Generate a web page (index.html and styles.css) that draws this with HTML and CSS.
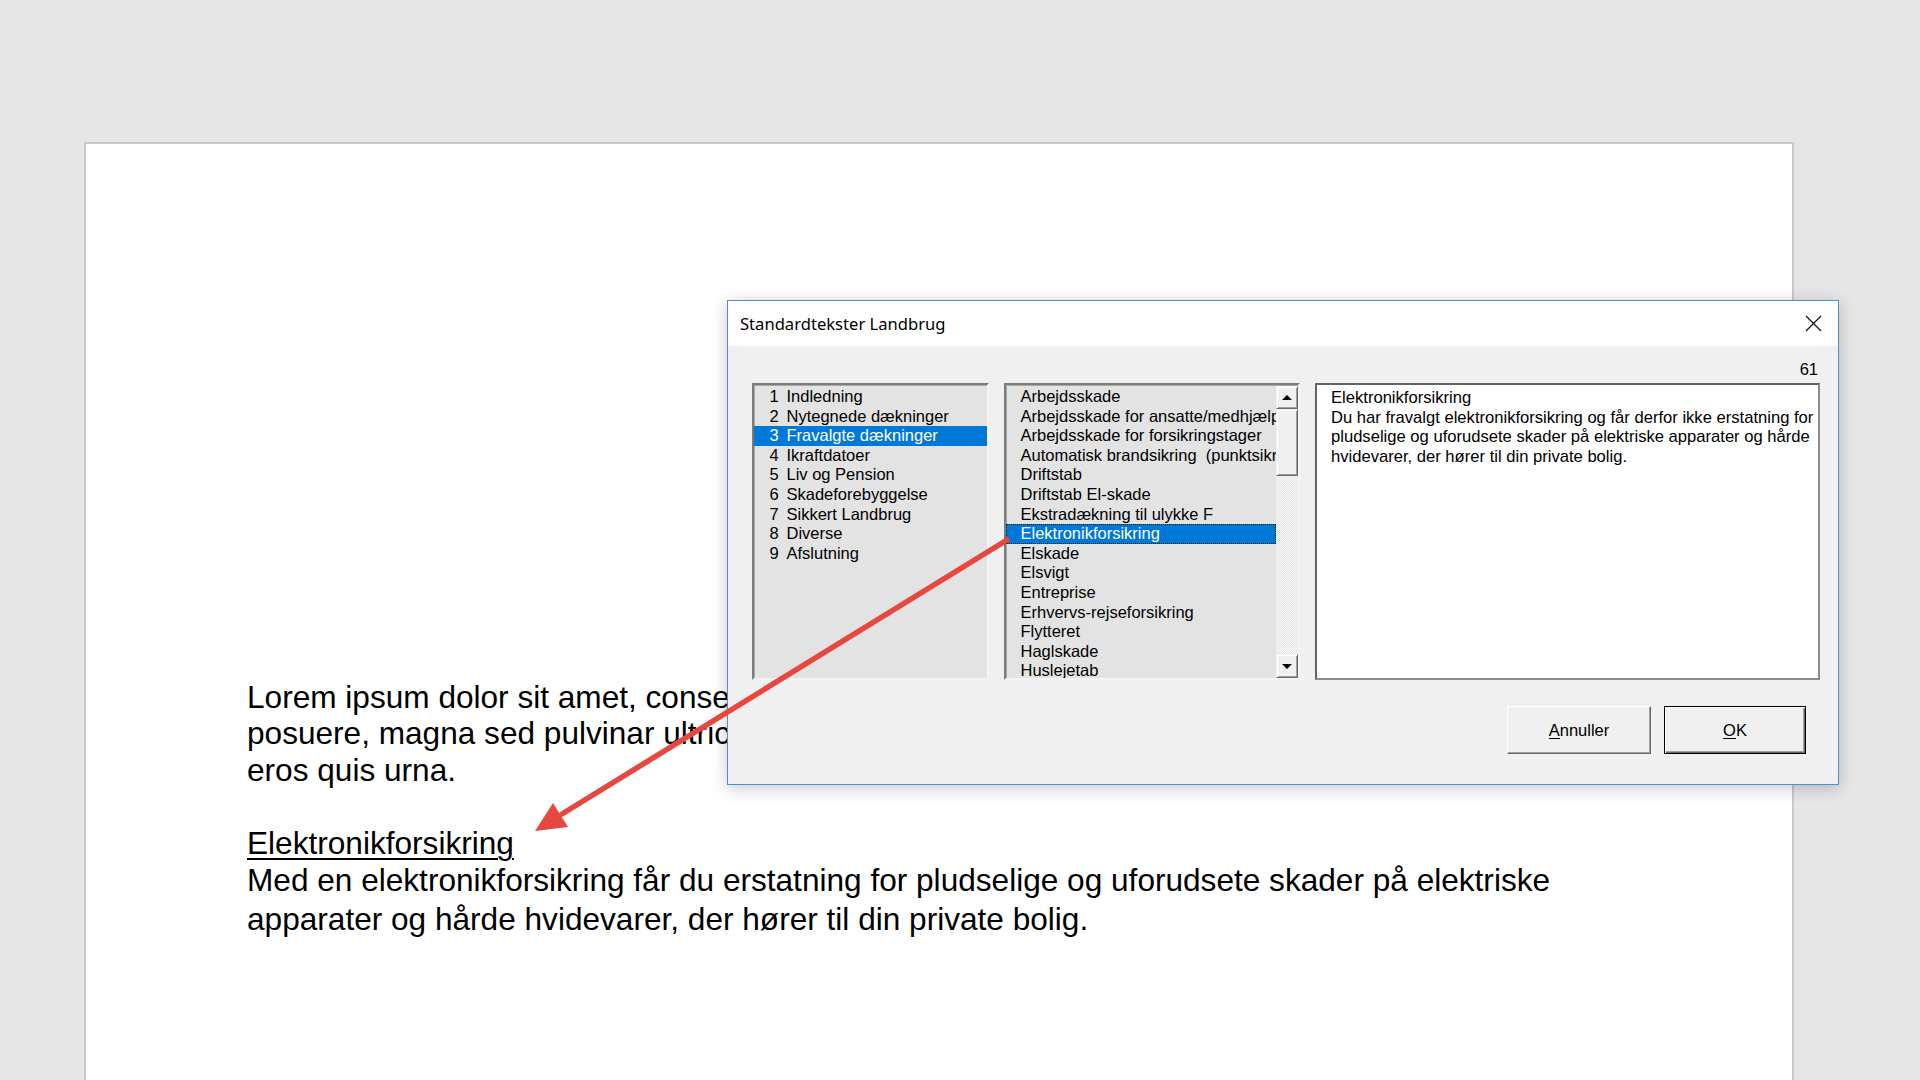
FILE: index.html
```html
<!DOCTYPE html>
<html lang="da">
<head>
<meta charset="utf-8">
<title>Standardtekster Landbrug</title>
<link rel="stylesheet" href="styles.css">
</head>
<body>
<div class="app">
  <div class="page">
    <div class="doc">
      <p class="para">Lorem ipsum dolor sit amet, consectetuer adipiscing elit. Maecenas porttitor congue massa. Fusce<br>posuere, magna sed pulvinar ultricies, purus lectus malesuada libero, sit amet commodo magna<br>eros quis urna.</p>
      <p class="para"><span class="heading">Elektronikforsikring</span><br>Med en elektronikforsikring får du erstatning for pludselige og uforudsete skader på elektriske<span class="line">apparater og hårde hvidevarer, der hører til din private bolig.</span></p>
    </div>
  </div>

  <div class="dialog">
    <div class="titlebar">
      <span class="title">Standardtekster Landbrug</span>
      <svg class="close" viewBox="0 0 17 17"><path d="M1 1L16 16M16 1L1 16" stroke="#111" stroke-width="1.3" fill="none"/></svg>
    </div>
    <div class="dlg-body">
      <div class="counter">61</div>
      <div class="panes">
        <div class="listbox cats">
          <div class="item"><span class="num">1</span>Indledning</div>
          <div class="item"><span class="num">2</span>Nytegnede dækninger</div>
          <div class="item sel"><span class="num">3</span>Fravalgte dækninger</div>
          <div class="item"><span class="num">4</span>Ikraftdatoer</div>
          <div class="item"><span class="num">5</span>Liv og Pension</div>
          <div class="item"><span class="num">6</span>Skadeforebyggelse</div>
          <div class="item"><span class="num">7</span>Sikkert Landbrug</div>
          <div class="item"><span class="num">8</span>Diverse</div>
          <div class="item"><span class="num">9</span>Afslutning</div>
        </div>
        <div class="listbox texts">
          <div class="items">
            <div class="item">Arbejdsskade</div>
            <div class="item">Arbejdsskade for ansatte/medhjælpere</div>
            <div class="item">Arbejdsskade for forsikringstager</div>
            <div class="item">Automatisk brandsikring&nbsp; (punktsikring)</div>
            <div class="item">Driftstab</div>
            <div class="item">Driftstab El-skade</div>
            <div class="item">Ekstradækning til ulykke F</div>
            <div class="item sel focus">Elektronikforsikring</div>
            <div class="item">Elskade</div>
            <div class="item">Elsvigt</div>
            <div class="item">Entreprise</div>
            <div class="item">Erhvervs-rejseforsikring</div>
            <div class="item">Flytteret</div>
            <div class="item">Haglskade</div>
            <div class="item">Huslejetab</div>
          </div>
          <div class="vscroll">
            <div class="sb-btn up"></div>
            <div class="sb-thumb"></div>
            <div class="sb-track"></div>
            <div class="sb-btn down"></div>
          </div>
        </div>
        <div class="preview">Elektronikforsikring<br>Du har fravalgt elektronikforsikring og får derfor ikke erstatning for<br>pludselige og uforudsete skader på elektriske apparater og hårde<br>hvidevarer, der hører til din private bolig.</div>
      </div>
      <div class="actions">
        <button class="btn"><span class="label mn-a">Annuller</span></button>
        <button class="btn default"><span class="label mn-o">OK</span></button>
      </div>
    </div>
  </div>

  <svg class="arrow" viewBox="0 0 1920 1080" width="1920" height="1080">
    <line x1="1007" y1="540" x2="562" y2="814" stroke="#e6473f" stroke-width="5.5" stroke-linecap="round"/>
    <polygon points="535,831 568,827 553,803" fill="#e6473f"/>
  </svg>
</div>
</body>
</html>
```

FILE: styles.css
```css
* { box-sizing: border-box; }
html, body { margin: 0; padding: 0; }
body {
  width: 1920px;
  height: 1080px;
  overflow: hidden;
  background: #e6e6e6;
  font-family: "Liberation Sans", Arial, sans-serif;
  color: #000;
}
.app {
  position: relative;
  width: 1920px;
  height: 1080px;
  padding: 142px 0 0 84px;
}
.page {
  width: 1710px;
  height: 1000px;
  background: #fff;
  border: 2px solid #c9c9c9;
  border-bottom: none;
  padding: 534.5px 0 0 161px;
}
.para {
  margin: 0 0 36.7px;
  font-size: 31.6px;
  line-height: 36.7px;
  white-space: nowrap;
}
.heading {
  text-decoration: underline;
  text-decoration-thickness: 2px;
  text-underline-offset: 4px;
}
.line {
  display: block;
  padding-top: 2px;
}

/* dialog window */
.dialog {
  position: absolute;
  left: 727px;
  top: 300px;
  width: 1112px;
  height: 485px;
  border: 1px solid #4a90d9;
  background: #f0f0f0;
  box-shadow: 0 3px 16px rgba(0, 0, 0, 0.22);
  display: flex;
  flex-direction: column;
}
.titlebar {
  flex: none;
  height: 45px;
  background: #fff;
  display: flex;
  align-items: center;
  justify-content: space-between;
  padding: 0 16px 0 12px;
}
.title {
  font-family: "Noto Sans", "Liberation Sans", sans-serif;
  font-size: 16.6px;
  color: #000;
}
.close { width: 17px; height: 17px; display: block; }

.dlg-body {
  flex: 1;
  display: flex;
  flex-direction: column;
  padding: 13px 18px 30px 24px;
  font-size: 16.5px;
}
.counter {
  height: 20px;
  line-height: 20px;
  text-align: right;
  padding-right: 2px;
}
.panes {
  margin-top: 4px;
  height: 297px;
  display: flex;
  gap: 15px;
}
.listbox {
  background: #e3e3e3;
  border: 2px solid;
  border-color: #7c7c7c #f4f4f4 #f4f4f4 #7c7c7c;
  box-shadow: inset 1px 1px 0 #a8a8a8;
  overflow: hidden;
  padding-top: 2px;
}
.cats { width: 237px; }
.texts { width: 296px; display: flex; padding-top: 1px; }
.item {
  height: 19.6px;
  line-height: 19.6px;
  white-space: nowrap;
  overflow: hidden;
}
.cats .item { padding-left: 15.5px; }
.num { display: inline-block; width: 17px; }
.items { flex: 1; overflow: hidden; min-width: 0; padding-top: 1px; }
.texts .item { padding-left: 14.5px; }
.item.sel { background: #0078d7; color: #fff; }
.item.focus { outline: 1px dotted #2a2000; outline-offset: -1px; }

.vscroll {
  width: 22px;
  flex: none;
  display: flex;
  flex-direction: column;
}
.sb-btn, .sb-thumb {
  background: #f0f0f0;
  border: 1px solid;
  border-color: #f0f0f0 #696969 #696969 #f0f0f0;
  box-shadow: inset 1px 1px 0 #fff, inset -1px -1px 0 #a0a0a0;
}
.sb-btn {
  height: 23px;
  display: flex;
  align-items: center;
  justify-content: center;
}
.sb-btn::before {
  content: "";
  border-left: 5px solid transparent;
  border-right: 5px solid transparent;
}
.up::before { border-bottom: 5px solid #000; }
.down::before { border-top: 5px solid #000; }
.down { height: 24px; }
.sb-thumb { height: 67px; }
.sb-track {
  flex: 1;
  background: repeating-conic-gradient(#e2e2e2 0 25%, #fbfbfb 0 50%) 0 0 / 2px 2px;
}

.preview {
  flex: 1;
  background: #fff;
  border: 2px solid;
  border-color: #646464 #8a8a8a #8a8a8a #646464;
  padding: 3px 4px 0 14px;
  font-size: 16.6px;
  line-height: 19.6px;
  white-space: nowrap;
  overflow: hidden;
}

.actions {
  margin-top: 26px;
  height: 48px;
  display: flex;
  justify-content: flex-end;
  gap: 13px;
  padding-right: 14px;
}
.btn {
  width: 144px;
  height: 48px;
  padding: 0;
  font-family: inherit;
  font-size: 16.5px;
  color: #000;
  background: #f0f0f0;
  border: 1px solid;
  border-color: #fff #696969 #696969 #fff;
  box-shadow: inset -1px -1px 0 #a0a0a0;
}
.btn.default {
  width: 142px;
  border: 1px solid #000;
  box-shadow: inset 1px 1px 0 #fff, inset -1px -1px 0 #696969, inset -2px -2px 0 #a0a0a0;
}
.label {
  position: relative;
  white-space: nowrap;
}
.label::after {
  content: "";
  position: absolute;
  left: 0;
  bottom: 0;
  height: 1px;
  background: #000;
}
.mn-a::after { width: 11px; }
.mn-o::after { width: 12.5px; }

.arrow {
  position: absolute;
  left: 0;
  top: 0;
  pointer-events: none;
}
```
